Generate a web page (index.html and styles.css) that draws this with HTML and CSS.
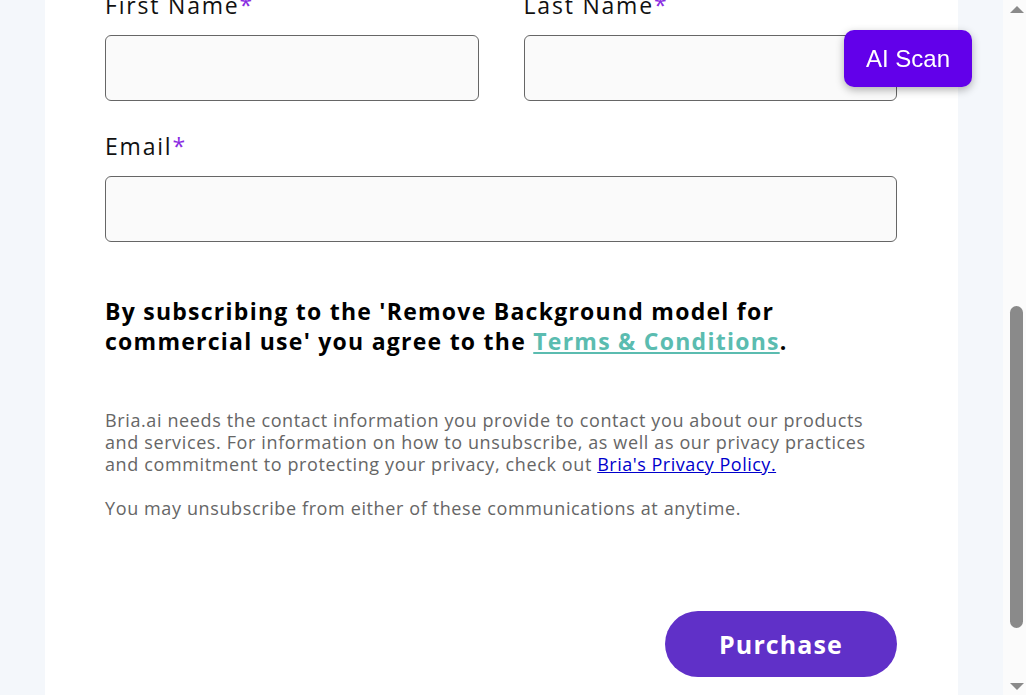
FILE: index.html
```html
<!DOCTYPE html>
<html lang="en">
<head>
<meta charset="utf-8">
<title>Subscribe</title>
<link rel="stylesheet" href="styles.css">
</head>
<body>
<div class="page">
  <main class="card">
    <form class="form">
      <div class="row">
        <div class="field">
          <label class="label">First Name<span class="req">*</span></label>
          <div class="input"></div>
        </div>
        <div class="field">
          <label class="label">Last Name<span class="req">*</span></label>
          <div class="input"></div>
        </div>
      </div>
      <div class="field">
        <label class="label">Email<span class="req">*</span></label>
        <div class="input"></div>
      </div>
      <p class="agree">By subscribing to the 'Remove Background model for commercial use' you agree to the <a class="terms" href="#">Terms &amp; Conditions</a>.</p>
      <p class="note">Bria.ai needs the contact information you provide to contact you about our products and services. For information on how to unsubscribe, as well as our privacy practices and commitment to protecting your privacy, check out <a class="privacy" href="#">Bria's Privacy Policy.</a></p>
      <p class="note note2">You may unsubscribe from either of these communications at anytime.</p>
      <div class="actions">
        <button type="button" class="purchase">Purchase</button>
      </div>
    </form>
  </main>
</div>
<div class="scrollbar">
  <div class="arrow up"></div>
  <div class="track"><div class="thumb"></div></div>
  <div class="arrow down"></div>
</div>
<button type="button" class="ai-scan">AI Scan</button>
</body>
</html>
```

FILE: styles.css
```css
html, body {
  margin: 0;
  padding: 0;
}
body {
  display: flex;
  height: 695px;
  overflow: hidden;
  background: #f4f7fb;
  font-family: "Open Sans", "Liberation Sans", sans-serif;
}
.page {
  flex: 1;
  padding: 0 45px;
}
.card {
  display: flow-root;
  background: #ffffff;
  width: 792px;
  height: 100%;
  padding: 0 61px 0 60px;
}
.form {
  margin-top: -10px;
  display: flex;
  flex-direction: column;
}
.row {
  display: flex;
  gap: 45px;
}
.row .field {
  flex: 1;
}
.field {
  display: flex;
  flex-direction: column;
  gap: 16px;
  margin-bottom: 30px;
}
.label {
  padding-top: 2px;
  font-size: 23px;
  line-height: 27px;
  letter-spacing: 1.8px;
  color: #111111;
}
.req {
  color: #8a2be2;
  letter-spacing: 0;
}
.input {
  height: 64px;
  border: 1px solid #666666;
  border-radius: 6px;
  background: #fafafa;
}
.agree {
  margin: 24px 0 0;
  font-size: 23px;
  line-height: 30px;
  font-weight: 700;
  letter-spacing: 1.25px;
  color: #000000;
}
.terms {
  color: #5bbcb0;
}
.note {
  margin: 53px 0 0;
  font-size: 18px;
  line-height: 22px;
  letter-spacing: 0.62px;
  color: #666666;
}
.note2 {
  margin-top: 22px;
}
.privacy {
  color: #0000cc;
  letter-spacing: 0.5px;
}
.actions {
  display: flex;
  justify-content: flex-end;
  margin-top: 92px;
}
.purchase {
  width: 232px;
  height: 66px;
  border: none;
  border-radius: 33px;
  background: #6030c8;
  color: #ffffff;
  font-family: inherit;
  font-size: 25px;
  font-weight: 700;
  letter-spacing: 1.1px;
}
.scrollbar {
  width: 23px;
  background: #fbfbfb;
  display: flex;
  flex-direction: column;
  align-items: center;
}
.arrow {
  width: 0;
  height: 0;
  border-left: 7px solid transparent;
  border-right: 7px solid transparent;
  margin-left: 4px;
}
.arrow.up {
  border-bottom: 7px solid #8a8a8a;
  margin-top: 6px;
}
.arrow.down {
  border-top: 7px solid #8a8a8a;
  margin-bottom: 5px;
}
.track {
  flex: 1;
  width: 100%;
  display: flex;
  justify-content: center;
  padding-left: 4px;
  box-sizing: border-box;
}
.thumb {
  width: 13px;
  margin-top: 293px;
  height: 322px;
  border-radius: 7px;
  background: #8a8a8a;
}
.ai-scan {
  position: fixed;
  left: 844px;
  top: 30px;
  width: 128px;
  height: 57px;
  border: none;
  border-radius: 10px;
  background: #6200ea;
  color: #ffffff;
  font-family: "Liberation Sans", Arial, sans-serif;
  font-size: 24px;
  box-shadow: 0 3px 8px rgba(0, 0, 0, 0.3);
}
```
